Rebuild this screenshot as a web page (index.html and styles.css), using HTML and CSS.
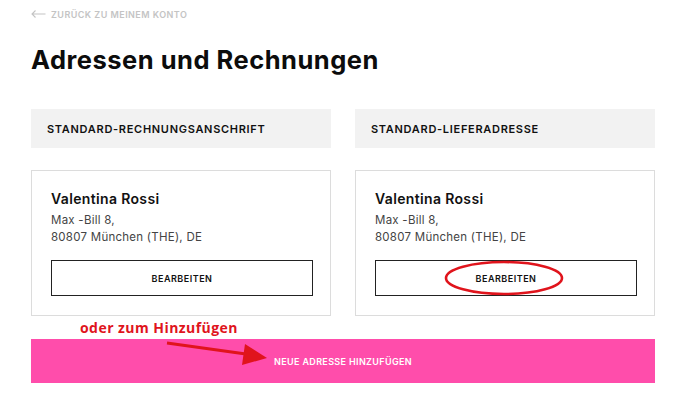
FILE: index.html
```html
<!DOCTYPE html>
<html lang="de">
<head>
    <meta charset="UTF-8">
    <meta name="viewport" content="width=device-width, initial-scale=1.0">
    <title>Adressen und Rechnungen</title>
    <link rel="stylesheet" href="styles.css">
</head>
<body>
    <div class="page">
        <a class="back" href="#">
            <svg width="15" height="8" viewBox="0 0 15 8">
                <path d="M14.5 4H1M4.5 0.5L1 4l3.5 3.5" fill="none" stroke="#c4c4c4" stroke-width="1.1"/>
            </svg>
            ZURÜCK ZU MEINEM KONTO
        </a>

        <h1>Adressen und Rechnungen</h1>

        <div class="columns">
            <div class="col">
                <div class="col-head">STANDARD-RECHNUNGSANSCHRIFT</div>
                <div class="card">
                    <div class="name">Valentina Rossi</div>
                    <p class="addr">Max -Bill 8,<br>80807 München (THE), DE</p>
                    <button class="edit">BEARBEITEN</button>
                </div>
            </div>
            <div class="col">
                <div class="col-head">STANDARD-LIEFERADRESSE</div>
                <div class="card">
                    <div class="name">Valentina Rossi</div>
                    <p class="addr">Max -Bill 8,<br>80807 München (THE), DE</p>
                    <button class="edit">BEARBEITEN</button>
                    <!-- annotation -->
                    <svg class="ring" width="124" height="40" viewBox="0 0 124 40">
                        <ellipse cx="62" cy="19" rx="58" ry="16" fill="none" stroke="#e0141c" stroke-width="2.6"/>
                    </svg>
                </div>
            </div>
        </div>

        <div class="add-wrap">
            <div class="note">oder zum Hinzufügen</div>
            <svg class="arrow" width="110" height="30" viewBox="0 0 110 30">
                <path d="M2 3L88 15" stroke="#e0141c" stroke-width="3" fill="none"/>
                <path d="M80 4L102 18L77 25Z" fill="#e0141c"/>
            </svg>
            <button class="add">NEUE ADRESSE HINZUFÜGEN</button>
        </div>
    </div>
</body>
</html>
```

FILE: styles.css
```css
body {
    margin: 0;
    background: #fff;
    font-family: Inter, "Noto Sans", sans-serif;
    color: #111;
}
.page {
    width: 624px;
    padding: 7px 0 0 31px;
}
.back {
    display: flex;
    align-items: center;
    gap: 5px;
    font-size: 9px;
    font-weight: 600;
    color: #c4c4c4;
    text-decoration: none;
    letter-spacing: 0.45px;
    height: 14px;
}
h1 {
    margin: 21px 0 0;
    font-size: 25.5px;
    font-weight: 700;
    letter-spacing: 0.5px;
    line-height: 36px;
    color: #0c0c0c;
}
.columns {
    display: grid;
    grid-template-columns: 300px 300px;
    gap: 24px;
    margin-top: 31px;
}
.col-head {
    background: #f2f2f2;
    height: 39px;
    display: flex;
    align-items: center;
    padding-left: 16px;
    font-size: 11px;
    font-weight: 600;
    color: #111;
    letter-spacing: 0.7px;
}
.card {
    position: relative;
    margin-top: 22px;
    border: 1px solid #dcdcdc;
    height: 144px;
    padding: 0 19px;
}
.name {
    margin-top: 18px;
    font-size: 14px;
    font-weight: 600;
    line-height: 20px;
    color: #111;
    letter-spacing: 0.35px;
}
.addr {
    margin: 3px 0 0;
    font-size: 11.5px;
    line-height: 17px;
    color: #444;
    letter-spacing: 0.25px;
}
.edit {
    display: block;
    width: 262px;
    height: 36px;
    margin-top: 14px;
    background: #fff;
    border: 1px solid #222;
    font-family: inherit;
    font-size: 9px;
    font-weight: 600;
    color: #111;
    letter-spacing: 0.5px;
    padding: 0;
}
.ring {
    position: absolute;
    left: 86px;
    top: 88px;
}
.add-wrap {
    position: relative;
    padding-top: 23px;
}
.note {
    position: absolute;
    left: 49px;
    top: 2px;
    font-family: "Open Sans", sans-serif;
    font-size: 14px;
    font-weight: 700;
    letter-spacing: 0.45px;
    color: #e0141c;
}
.arrow {
    position: absolute;
    left: 134px;
    top: 24px;
    z-index: 1;
}
.add {
    display: block;
    width: 624px;
    height: 44px;
    border: none;
    background: #ff4dab;
    color: #fff;
    font-family: inherit;
    font-size: 9px;
    font-weight: 600;
    letter-spacing: 0.35px;
    padding: 0;
}
```
